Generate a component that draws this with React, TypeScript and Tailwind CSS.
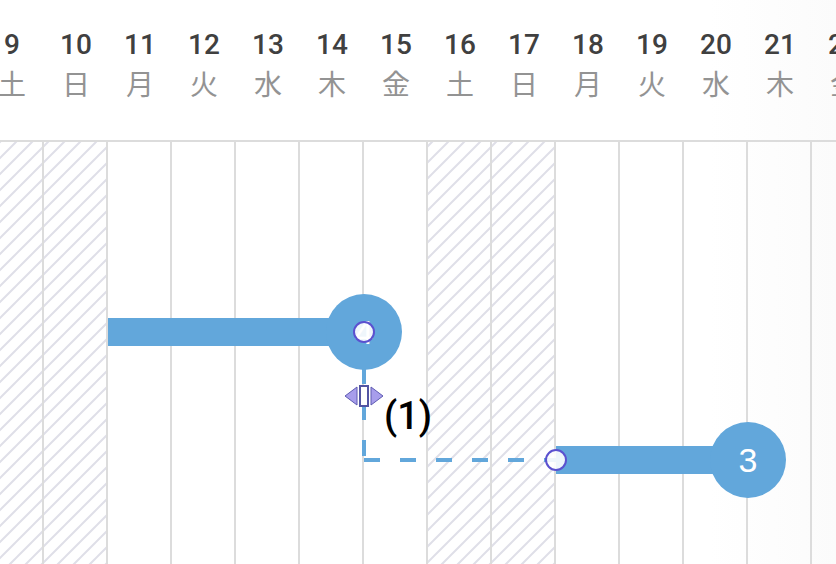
const WEEKDAYS = ["日", "月", "火", "水", "木", "金", "土"];

const days = Array.from({ length: 22 }, (_, i) => {
  const date = i + 9;
  const weekday = (date + 4) % 7;
  return { date, label: WEEKDAYS[weekday], weekend: weekday === 0 || weekday === 6 };
});

function Hatch() {
  return (
    <svg className="block h-full w-full" aria-hidden="true">
      <defs>
        <pattern id="hatch" width="16" height="16" patternUnits="userSpaceOnUse">
          <path d="M-4 8 L8 -4 M0 20 L20 0" stroke="#dfdfe8" strokeWidth="2" />
        </pattern>
      </defs>
      <rect width="100%" height="100%" fill="url(#hatch)" />
    </svg>
  );
}

function DayHeader() {
  return (
    <header className="flex h-[142px] border-b-2 border-[#dcdcdc] pt-7">
      {days.map((d) => (
        <div key={d.date} className="flex w-16 shrink-0 flex-col items-center gap-[7px]">
          <span className="text-[28px] leading-[34px] font-medium text-[#404040]">{d.date}</span>
          <span className="text-[28px] leading-[34px] text-[#939393]">{d.label}</span>
        </div>
      ))}
    </header>
  );
}

function DayGrid() {
  return (
    <div className="absolute inset-0 flex">
      {days.map((d) => (
        <div key={d.date} className="w-16 shrink-0 border-r-2 border-[#dcdcdc]">
          {d.weekend && <Hatch />}
        </div>
      ))}
      <svg className="absolute" width="700" height="340" aria-hidden="true">
        <path d="M384 190 V318 M384 318 H576" fill="none" stroke="#62a7db" strokeWidth="4" strokeDasharray="16 20" />
      </svg>
    </div>
  );
}

function Handle({ label }: { label: string }) {
  return (
    <button
      type="button"
      aria-label={label}
      className="z-10 size-[22px] shrink-0 rounded-full border-2 border-[#5b51cf] bg-white/90"
    />
  );
}

function Milestone({ value, handle }: { value: number; handle?: string }) {
  return (
    <div className="-ml-[38px] grid size-[76px] place-items-center rounded-full bg-[#62a7db] font-['Liberation_Sans',sans-serif] text-[34px] leading-10 text-white *:col-start-1 *:row-start-1">
      <span>{value}</span>
      {handle && <Handle label={handle} />}
    </div>
  );
}

function ResizeCursor() {
  return (
    <svg width="40" height="24" viewBox="0 0 40 24" aria-hidden="true">
      <path d="M1 12 L13 3 V21 Z M39 12 L27 3 V21 Z" fill="#a79deb" stroke="#5e5bb2" strokeWidth="1" />
      <rect x="16" y="2" width="8" height="20" fill="#fff" stroke="#5254a3" strokeWidth="2" />
    </svg>
  );
}

export default function App() {
  return (
    <main className="h-screen overflow-hidden bg-linear-to-r from-white from-85% to-[#fbfbfb] font-[Roboto,'Noto_Sans_CJK_JP',sans-serif]">
      <div className="-ml-5 flex h-full w-max flex-col">
        <DayHeader />
        <section className="relative grow">
          <DayGrid />
          <div className="relative flex flex-col gap-[52px] pt-[152px]">
            <div className="flex items-center pl-32">
              <div className="h-7 w-64 bg-[#62a7db]" />
              <Milestone value={4} handle="タスク 4 の終了" />
            </div>
            <div className="flex items-center pl-[576px]">
              <div className="flex h-7 w-48 items-center bg-[#62a7db]">
                <div className="-ml-[11px] flex">
                  <Handle label="タスク 3 の開始" />
                </div>
              </div>
              <Milestone value={3} />
            </div>
          </div>
          <div className="absolute top-[242px] left-[364px] flex">
            <ResizeCursor />
            <span className="pt-2 text-[38px] leading-12 font-medium text-black">(1)</span>
          </div>
        </section>
      </div>
    </main>
  );
}
